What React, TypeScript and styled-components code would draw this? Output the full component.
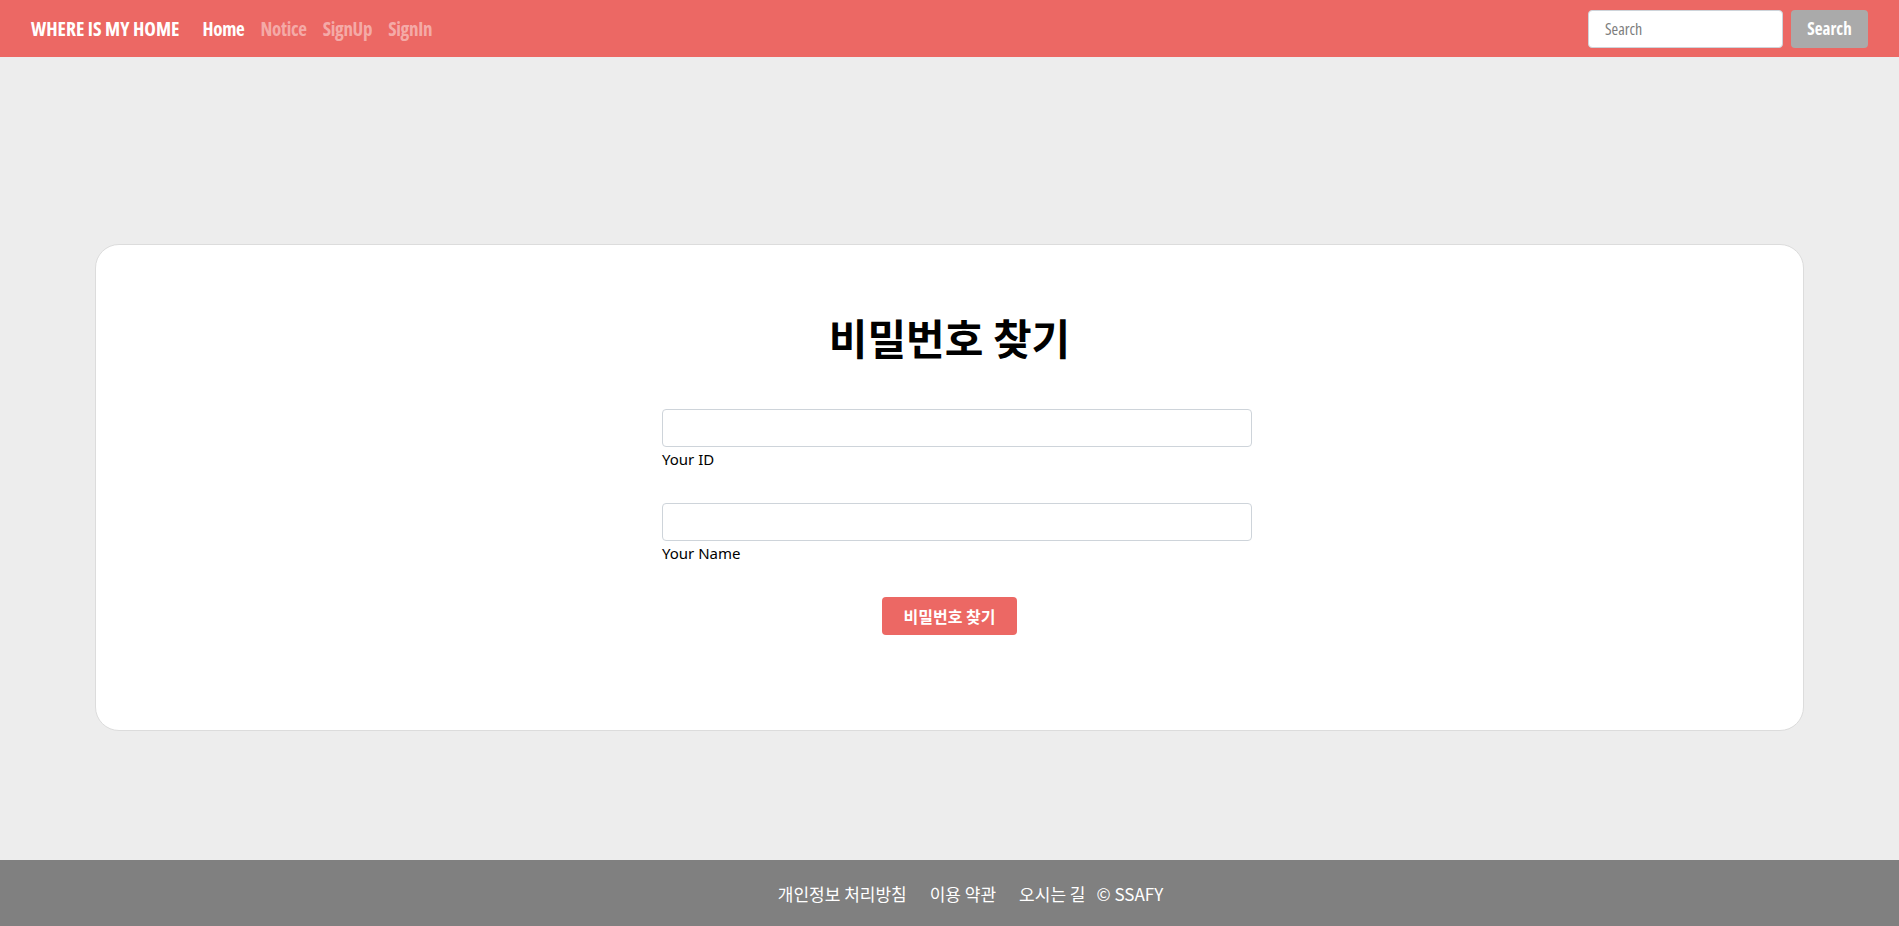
import React from "react";
import styled, { createGlobalStyle } from "styled-components";

const GlobalStyle = createGlobalStyle`
  html, body { margin: 0; padding: 0; }
  body {
    background: #ededed;
    font-family: "Noto Sans", "Noto Sans CJK KR", sans-serif;
  }
  #root { min-height: 100vh; display: flex; flex-direction: column; }
  * { box-sizing: border-box; }
`;

const condensed = `
  font-family: "Open Sans", Roboto, sans-serif;
  font-stretch: 75%;
`;

const Nav = styled.nav`
  height: 57px;
  background: #ec6864;
  display: flex;
  align-items: center;
  padding: 0 31px;
  ${condensed}
`;

const Brand = styled.a`
  color: #fff;
  font-size: 19.6px;
  font-weight: 700;
  margin-right: 23px;
  text-decoration: none;
`;

const NavLinks = styled.div`
  display: flex;
  gap: 16px;
  flex: 1;
`;

const NavLink = styled.a<{ $active?: boolean }>`
  color: ${(p) => (p.$active ? "#fff" : "rgba(255,255,255,0.45)")};
  font-size: 19px;
  font-weight: 700;
  letter-spacing: -0.3px;
  text-decoration: none;
`;

const SearchForm = styled.form`
  display: flex;
  gap: 8px;
`;

const SearchInput = styled.input`
  width: 195px;
  height: 38px;
  border: 1px solid #ced4da;
  border-radius: 4px;
  padding: 0 16px;
  ${condensed}
  font-size: 16px;
  color: #495057;
  &::placeholder { color: #7d7d7d; }
`;

const SearchButton = styled.button`
  width: 77px;
  height: 38px;
  border: none;
  border-radius: 4px;
  background: #aaaaaa;
  color: #fff;
  ${condensed}
  font-weight: 700;
  font-size: 17px;
`;

const Main = styled.main`
  flex: 1;
  padding: 187px 95px 129px;
`;

const Card = styled.section`
  background: #fff;
  border: 1px solid #dcdcdc;
  border-radius: 24px;
  height: 487px;
  display: flex;
  flex-direction: column;
  align-items: center;
  padding-top: 62px;
`;

const Title = styled.h1`
  margin: 0 0 42px;
  font-family: "Noto Sans CJK KR", sans-serif;
  font-weight: 700;
  font-size: 42px;
  line-height: 60px;
  color: #000;
`;

const Fields = styled.div`
  width: 590px;
  margin-left: 15px;
  display: flex;
  flex-direction: column;
  gap: 32px;
`;

const Field = styled.div`
  width: 100%;
`;

const TextInput = styled.input`
  display: block;
  width: 100%;
  height: 38px;
  border: 1px solid #ced4da;
  border-radius: 4px;
  padding: 0 12px;
  font-size: 16px;
`;

const Label = styled.label`
  display: block;
  font-family: "Noto Sans", "Noto Sans CJK KR", sans-serif;
  font-size: 15px;
  line-height: 24px;
  color: #000;
`;

const SubmitButton = styled.button`
  margin-top: 32px;
  height: 38px;
  padding: 0 22px;
  border: none;
  border-radius: 4px;
  background: #ec6864;
  color: #fff;
  font-family: "Noto Sans CJK KR", sans-serif;
  font-weight: 700;
  font-size: 16px;
`;

const Footer = styled.footer`
  height: 66px;
  background: #808080;
  display: flex;
  align-items: center;
  justify-content: center;
  gap: 23px;
  padding-left: 42px;
  color: #fff;
  font-family: "Noto Sans CJK KR", sans-serif;
  font-size: 17px;
`;

const FooterLink = styled.a`
  color: #fff;
  text-decoration: none;
`;

const Copy = styled.span`
  margin-left: -12px;
`;

export default function App() {
  return (
    <>
      <GlobalStyle />
      <Nav>
        <Brand href="#">WHERE IS MY HOME</Brand>
        <NavLinks>
          <NavLink href="#" $active>Home</NavLink>
          <NavLink href="#">Notice</NavLink>
          <NavLink href="#">SignUp</NavLink>
          <NavLink href="#">SignIn</NavLink>
        </NavLinks>
        <SearchForm onSubmit={(e) => e.preventDefault()}>
          <SearchInput placeholder="Search" />
          <SearchButton type="submit">Search</SearchButton>
        </SearchForm>
      </Nav>
      <Main>
        <Card>
          <Title>비밀번호 찾기</Title>
          <Fields>
            <Field>
              <TextInput id="uid" />
              <Label htmlFor="uid">Your ID</Label>
            </Field>
            <Field>
              <TextInput id="uname" />
              <Label htmlFor="uname">Your Name</Label>
            </Field>
          </Fields>
          <SubmitButton type="button">비밀번호 찾기</SubmitButton>
        </Card>
      </Main>
      <Footer>
        <FooterLink href="#">개인정보 처리방침</FooterLink>
        <FooterLink href="#">이용 약관</FooterLink>
        <FooterLink href="#">오시는 길</FooterLink>
        <Copy>© SSAFY</Copy>
      </Footer>
    </>
  );
}
